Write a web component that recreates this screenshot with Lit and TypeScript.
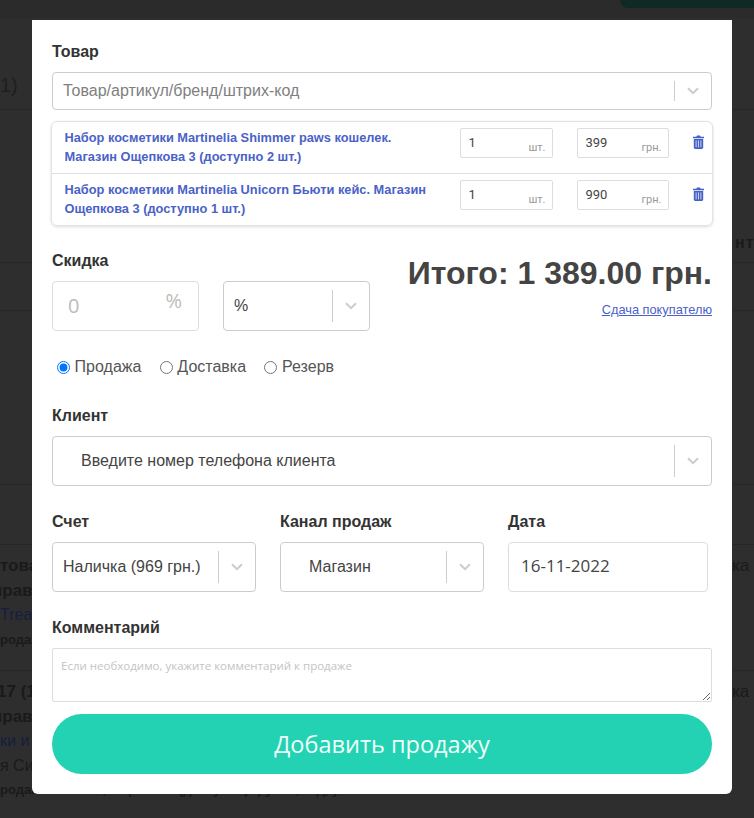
import { LitElement, html, css, svg } from "lit";
import { customElement } from "lit/decorators.js";

const chevron = html`<svg class="chev" viewBox="0 0 12 8" width="12" height="8"><path d="M1 1.2 6 6.2 11 1.2" fill="none" stroke="#ccc" stroke-width="2"/></svg>`;
const trash = html`<svg class="trash" viewBox="0 0 11 14" width="11" height="14">
  <path fill="#4560c6" d="M0 1.8h3.3L4 .4h3l.7 1.4H11v1.4H0zM.8 4h9.4v8.6c0 .8-.6 1.4-1.4 1.4H2.2c-.8 0-1.4-.6-1.4-1.4z"/>
  ${svg`<path stroke="#c9d2f0" stroke-width="1" d="M3.1 5.4v7M5.5 5.4v7M7.9 5.4v7"/>`}
</svg>`;

@customElement("app-root")
export class AppRoot extends LitElement {
  static styles = css`
    :host { display: block; width: 754px; height: 818px; position: relative; overflow: hidden; background: #2e2e2e; font-family: "Liberation Sans", Arial, sans-serif; }
    .page { display: flex; flex-direction: column; height: 818px; color: #171717; overflow: hidden; }
    .top { height: 18px; flex: none; background: #2b2b2b; display: flex; justify-content: flex-end; }
    .pill { width: 134px; height: 8px; background: #0f2a25; border-radius: 0 0 0 14px; }
    .bg { flex: none; border-bottom: 1px solid #272727; box-sizing: border-box; display: flex; justify-content: space-between; }
    .b1 { height: 92px; font-size: 20px; color: #1f1f1f; align-items: flex-end; padding-bottom: 12px; }
    .b2 { height: 153px; align-items: flex-end; }
    .b2 span { margin-left: auto; font-size: 16px; font-weight: 700; padding-bottom: 10px; letter-spacing: 1px; color: #1a1a1a; width: 19px; white-space: nowrap; overflow: hidden; }
    .b3 { height: 48px; }
    .b4 { height: 174px; }
    .b5 { height: 60px; }
    .rowbg { flex: none; height: 126px; box-sizing: border-box; padding-top: 9px; display: flex; justify-content: space-between; font-size: 16px; color: #1a1a1a; }
    .rowbg.b { border-bottom: 1px solid #272727; }
    .l { display: flex; flex-direction: column; width: 32px; line-height: 24.6px; white-space: nowrap; }
    .l b { font-weight: 700; font-size: 17px; }
    .l .s { margin-left: -8px; }
    .l .t { margin-left: -3px; }
    .l .u { color: #161f3e; }
    .l small { font-size: 13px; font-weight: 700; }
    .r { margin-right: 4px; width: 18px; white-space: nowrap; line-height: 24px; font-size: 17px; }

    .modal { position: absolute; left: 32px; top: 20px; width: 700px; height: 774px; box-sizing: border-box; background: #fff; padding: 22px 20px 20px; border-radius: 0 0 6px 6px; color: #333; }
    .label { font-size: 16px; font-weight: 700; line-height: 20px; color: #333; margin-bottom: 10px; }
    .select { display: flex; align-items: center; box-sizing: border-box; border: 1px solid #ccc; border-radius: 4px; background: #fff; font-size: 16px; color: #444; }
    .select .v { flex: 1; min-width: 0; padding-left: 10px; white-space: nowrap; }
    .select .sep { width: 1px; align-self: stretch; background: #ccc; margin: 8px 0; }
    .select .ic { width: 36px; display: flex; justify-content: center; flex: none; }
    .chev { display: block; }
    .h38 { height: 38px; }
    .h50 { height: 50px; }
    .select .ph { color: #808080; }
    .select .in { padding-left: 28px; }
    .list { margin: 11px -1px 0; width: 661.5px; box-sizing: border-box; border: 1px solid #e3e3e3; border-radius: 6px; box-shadow: 0 1px 3px rgba(0,0,0,.14); }
    .item { height: 51px; box-sizing: border-box; display: flex; align-items: flex-start; padding: 6px 0 0 12.5px; }
    .item + .item { border-top: 1px solid #e0e0e0; height: 52px; }
    .name { width: 372px; flex: none; font-size: 12.8px; font-weight: 700; line-height: 19.2px; color: #4a62c8; }
    .qty { box-sizing: border-box; height: 30px; border: 1px solid #ddd; border-radius: 2px; display: flex; justify-content: space-between; font-family: Roboto, sans-serif; font-size: 13px; color: #444; padding: 0 6px 0 8px; line-height: 27px; flex: none; }
    .qty i { font-style: normal; font-size: 11px; color: #999; padding-top: 5px; }
    .q1 { width: 93px; margin-left: 23px; }
    .q2 { width: 92px; margin-left: 24px; }
    .trash { margin: 7px 0 0 24px; flex: none; }

    .disc { display: flex; justify-content: space-between; margin-top: 25px; height: 80px; }
    .discL { display: flex; flex-direction: column; }
    .discCtl { display: flex; gap: 24px; }
    .num { box-sizing: border-box; width: 147px; height: 50px; border: 1px solid #ddd; border-radius: 4px; display: flex; justify-content: space-between; font-family: "Open Sans", sans-serif; color: #bbb; padding: 0 16px 0 15px; font-size: 20px; }
    .num span:first-child { padding-top: 10px; }
    .num span:last-child { padding-top: 5px; }
    .w147 { width: 147px; }
    .total { text-align: right; }
    .sum { font-size: 32px; font-weight: 700; color: #444; line-height: 36px; margin-top: 4px; white-space: nowrap; }
    .link { display: block; font-size: 12.8px; color: #4a62c8; text-decoration: underline; line-height: 14px; margin-top: 12px; }
    .radios { display: flex; margin: 26px 0 0 5px; height: 20px; align-items: center; font-size: 16px; color: #555; }
    .radios label { display: flex; align-items: center; }
    .radios input { margin: 0 4.6px 0 0; width: 13px; height: 13px; }
    .radios label + label { margin-left: 18.4px; }
    .cl { margin-top: 29px; }
    .grid { display: flex; gap: 24px; margin-top: 26px; }
    .col { flex: none; display: flex; flex-direction: column; }
    .c1 { width: 204px; } .c2 { width: 204px; } .c3 { width: 200px; }
    .date { box-sizing: border-box; height: 50px; border: 1px solid #ddd; border-radius: 4px; font-family: "Open Sans", sans-serif; font-size: 17px; color: #444; padding-left: 12px; line-height: 46px; }
    .cm { margin-top: 26px; }
    textarea { display: block; box-sizing: border-box; width: 660px; height: 54px; margin: 0; border: 1px solid #ddd; border-radius: 2px; padding: 9px 8px; font-family: "Open Sans", sans-serif; font-size: 11.5px; outline: none; resize: vertical; }
    textarea::placeholder { color: #c4c4c4; }
    .btn { display: block; width: 660px; height: 60px; margin-top: 12px; border: 0; border-radius: 30px; background: #22d2b2; color: #effffb; font-family: "Open Sans", sans-serif; font-size: 23.5px; padding: 0; text-align: center; }
  `;

  item(name: string, price: string) {
    return html`<div class="item">
      <div class="name">${name}</div>
      <div class="qty q1"><span>1</span><i>шт.</i></div>
      <div class="qty q2"><span>${price}</span><i>грн.</i></div>
      ${trash}
    </div>`;
  }

  sel(text: string, cls = "", vCls = "") {
    return html`<div class="select ${cls}"><div class="v ${vCls}">${text}</div><div class="sep"></div><div class="ic">${chevron}</div></div>`;
  }

  render() {
    return html`
      <div class="page">
        <div class="top"><div class="pill"></div></div>
        <div class="bg b1"><span>1)</span></div>
        <div class="bg b2"><span>нт</span></div>
        <div class="bg b3"></div>
        <div class="bg b4"></div>
        <div class="bg b5"></div>
        <div class="rowbg b">
          <div class="l"><b>това</b><b class="s">прав</b><span class="u">Treas</span><small>родаж</small></div>
          <div class="r">ка</div>
        </div>
        <div class="rowbg">
          <div class="l"><b class="t">17 (1</b><b class="s">прав</b><span class="u">ки и</span><span>я Сид</span><small>родаж: Наличка, Ощепкова (доступно) группа, код, упаковка</small></div>
          <div class="r">ка</div>
        </div>
      </div>
      <div class="modal">
        <div class="label">Товар</div>
        ${this.sel("Товар/артикул/бренд/штрих-код", "h38", "ph")}
        <div class="list">
          ${this.item("Набор косметики Martinelia Shimmer paws кошелек. Магазин Ощепкова 3 (доступно 2 шт.)", "399")}
          ${this.item("Набор косметики Martinelia Unicorn Бьюти кейс. Магазин Ощепкова 3 (доступно 1 шт.)", "990")}
        </div>
        <div class="disc">
          <div class="discL">
            <div class="label">Скидка</div>
            <div class="discCtl">
              <div class="num"><span>0</span><span>%</span></div>
              ${this.sel("%", "h50 w147")}
            </div>
          </div>
          <div class="total">
            <div class="sum">Итого: 1 389.00 грн.</div>
            <a class="link">Сдача покупателю</a>
          </div>
        </div>
        <div class="radios">
          <label><input type="radio" name="t" checked />Продажа</label>
          <label><input type="radio" name="t" />Доставка</label>
          <label><input type="radio" name="t" />Резерв</label>
        </div>
        <div class="label cl">Клиент</div>
        ${this.sel("Введите номер телефона клиента", "h50", "in")}
        <div class="grid">
          <div class="col c1"><div class="label">Счет</div>${this.sel("Наличка (969 грн.)", "h50")}</div>
          <div class="col c2"><div class="label">Канал продаж</div>${this.sel("Магазин", "h50", "in")}</div>
          <div class="col c3"><div class="label">Дата</div><div class="date">16-11-2022</div></div>
        </div>
        <div class="label cm">Комментарий</div>
        <textarea placeholder="Если необходимо, укажите комментарий к продаже"></textarea>
        <button class="btn">Добавить продажу</button>
      </div>
    `;
  }
}
